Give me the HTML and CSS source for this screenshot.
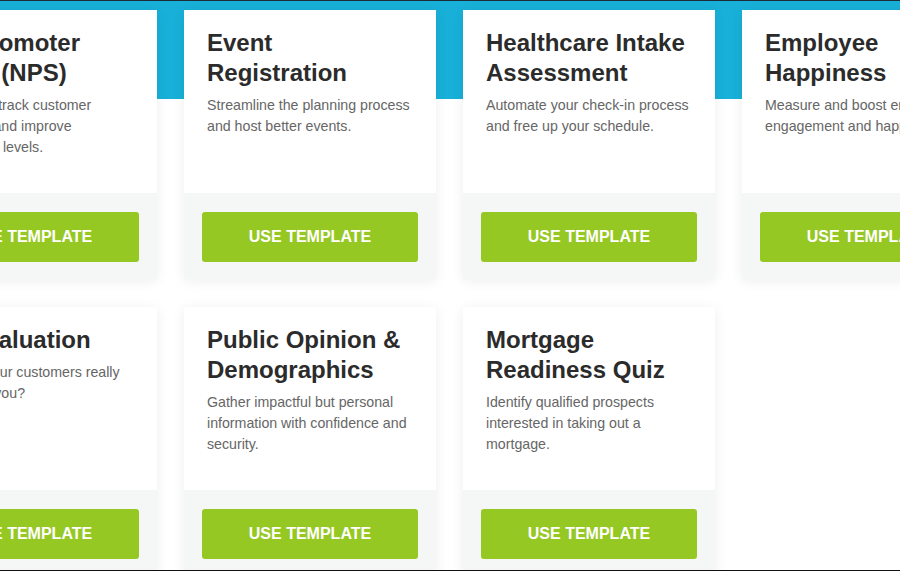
FILE: index.html
```html
<!DOCTYPE html>
<html>
<head>
<meta charset="utf-8">
<link rel="stylesheet" href="styles.css">
</head>
<body>
<div class="page">
  <div class="grid">
    <div class="card">
      <div class="card-body">
        <h3 class="card-title">Net Promoter Score (NPS)</h3>
        <p class="card-desc">Accurately track customer sentiment and improve satisfaction levels.</p>
      </div>
      <div class="card-foot"><a class="btn">USE TEMPLATE</a></div>
    </div>
    <div class="card">
      <div class="card-body">
        <h3 class="card-title">Event Registration</h3>
        <p class="card-desc">Streamline the planning process and host better events.</p>
      </div>
      <div class="card-foot"><a class="btn">USE TEMPLATE</a></div>
    </div>
    <div class="card">
      <div class="card-body">
        <h3 class="card-title">Healthcare Intake Assessment</h3>
        <p class="card-desc">Automate your check-in process and free up your schedule.</p>
      </div>
      <div class="card-foot"><a class="btn">USE TEMPLATE</a></div>
    </div>
    <div class="card">
      <div class="card-body">
        <h3 class="card-title">Employee Happiness</h3>
        <p class="card-desc">Measure and boost employee engagement and happiness.</p>
      </div>
      <div class="card-foot"><a class="btn">USE TEMPLATE</a></div>
    </div>
    <div class="card">
      <div class="card-body">
        <h3 class="card-title">Art Evaluation</h3>
        <p class="card-desc">What do your customers really feel about you?</p>
      </div>
      <div class="card-foot"><a class="btn">USE TEMPLATE</a></div>
    </div>
    <div class="card">
      <div class="card-body">
        <h3 class="card-title">Public Opinion &amp; Demographics</h3>
        <p class="card-desc">Gather impactful but personal information with confidence and security.</p>
      </div>
      <div class="card-foot"><a class="btn">USE TEMPLATE</a></div>
    </div>
    <div class="card">
      <div class="card-body">
        <h3 class="card-title">Mortgage Readiness Quiz</h3>
        <p class="card-desc">Identify qualified prospects interested in taking out a mortgage.</p>
      </div>
      <div class="card-foot"><a class="btn">USE TEMPLATE</a></div>
    </div>
  </div>
</div>
</body>
</html>
```
FILE: styles.css
```css
html, body {
  margin: 0;
  padding: 0;
  background: #ffffff;
}
.page {
  width: 900px;
  height: 571px;
  box-sizing: border-box;
  overflow: hidden;
  border-top: 1px solid #1c2b36;
  border-bottom: 1px solid #111111;
  background: linear-gradient(#18b0d8 0, #18b0d8 98px, #ffffff 98px);
  font-family: "Liberation Sans", Arial, sans-serif;
}
.grid {
  display: grid;
  grid-template-columns: repeat(4, 252px);
  gap: 28px 27px;
  margin-left: -95px;
  padding-top: 9px;
}
.card {
  display: flex;
  flex-direction: column;
  background: #ffffff;
  box-shadow: 0 2px 12px rgba(0, 0, 0, 0.07);
}
.card-body {
  flex: 1;
  padding: 18px 23px 35px;
}
.card-title {
  margin: 0;
  font-size: 24px;
  line-height: 30px;
  font-weight: 700;
  color: #2b2b2b;
}
.card-desc {
  margin: 7px 0 0;
  font-size: 14.2px;
  line-height: 21px;
  color: #666666;
}
.card-foot {
  background: #f5f7f7;
  padding: 19px 18px 17px;
}
.btn {
  display: flex;
  align-items: center;
  justify-content: center;
  height: 50px;
  border-radius: 3px;
  background: #96c824;
  color: #ffffff;
  font-weight: 700;
  font-size: 16px;
}
```
